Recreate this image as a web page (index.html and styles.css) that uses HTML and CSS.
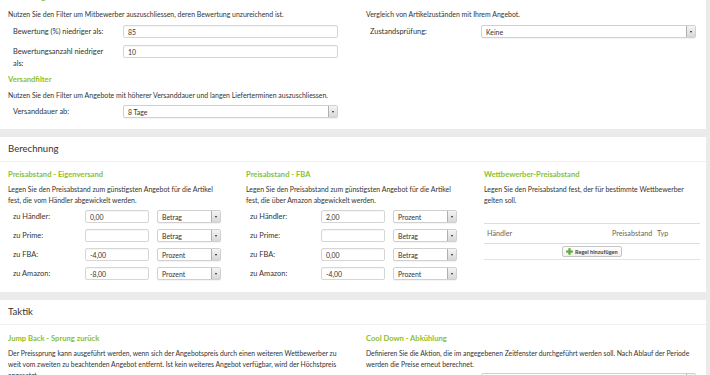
FILE: index.html
```html
<!DOCTYPE html>
<html lang="de">
<head>
<meta charset="utf-8">
<title>Einstellungen</title>
<link rel="stylesheet" href="styles.css">
</head>
<body>
<div class="page">
  <section class="panel panel-top">
    <div class="cols2">
      <div class="col">
        <h3 class="title">Bewertungsfilter</h3>
        <p class="desc">Nutzen Sie den Filter um Mitbewerber auszuschliessen, deren Bewertung unzureichend ist.</p>
        <div class="row"><label class="lbl">Bewertung (%) niedriger als:</label><input class="field" value="85"></div>
        <div class="row row-gap"><label class="lbl">Bewertungsanzahl niedriger als:</label><input class="field" value="10"></div>
        <h3 class="title title-sub">Versandfilter</h3>
        <p class="desc desc-tight">Nutzen Sie den Filter um Angebote mit höherer Versanddauer und langen Lieferterminen auszuschliessen.</p>
        <div class="row row-sel"><label class="lbl">Versanddauer ab:</label><div class="select"><span class="sel-text">8 Tage</span><span class="arrow"></span></div></div>
      </div>
      <div class="col">
        <h3 class="title">Zustandsfilter</h3>
        <p class="desc">Vergleich von Artikelzuständen mit Ihrem Angebot.</p>
        <div class="row"><label class="lbl">Zustandsprüfung:</label><div class="select"><span class="sel-text">Keine</span><span class="arrow"></span></div></div>
      </div>
    </div>
  </section>

  <section class="panel">
    <h2 class="panel-head">Berechnung</h2>
    <div class="panel-body cols3">
      <div class="col">
        <h3 class="title">Preisabstand - Eigenversand</h3>
        <p class="desc desc-b desc-narrow">Legen Sie den Preisabstand zum günstigsten Angebot für die Artikel fest, die vom Händler abgewickelt werden.</p>
        <div class="prow"><label class="plbl">zu Händler:</label><input class="field pfield" value="0,00"><div class="select psel"><span class="sel-text">Betrag</span><span class="arrow"></span></div></div>
        <div class="prow"><label class="plbl">zu Prime:</label><input class="field pfield" value=""><div class="select psel"><span class="sel-text">Betrag</span><span class="arrow"></span></div></div>
        <div class="prow"><label class="plbl">zu FBA:</label><input class="field pfield" value="-4,00"><div class="select psel"><span class="sel-text">Prozent</span><span class="arrow"></span></div></div>
        <div class="prow"><label class="plbl">zu Amazon:</label><input class="field pfield" value="-8,00"><div class="select psel"><span class="sel-text">Prozent</span><span class="arrow"></span></div></div>
      </div>
      <div class="col">
        <h3 class="title">Preisabstand - FBA</h3>
        <p class="desc desc-b desc-narrow">Legen Sie den Preisabstand zum günstigsten Angebot für die Artikel fest, die über Amazon abgewickelt werden.</p>
        <div class="prow"><label class="plbl">zu Händler:</label><input class="field pfield" value="2,00"><div class="select psel"><span class="sel-text">Prozent</span><span class="arrow"></span></div></div>
        <div class="prow"><label class="plbl">zu Prime:</label><input class="field pfield" value=""><div class="select psel"><span class="sel-text">Betrag</span><span class="arrow"></span></div></div>
        <div class="prow"><label class="plbl">zu FBA:</label><input class="field pfield" value="0,00"><div class="select psel"><span class="sel-text">Betrag</span><span class="arrow"></span></div></div>
        <div class="prow"><label class="plbl">zu Amazon:</label><input class="field pfield" value="-4,00"><div class="select psel"><span class="sel-text">Prozent</span><span class="arrow"></span></div></div>
      </div>
      <div class="col">
        <h3 class="title">Wettbewerber-Preisabstand</h3>
        <p class="desc desc-b desc-narrow">Legen Sie den Preisabstand fest, der für bestimmte Wettbewerber gelten soll.</p>
        <div class="rules">
          <div class="rules-head"><span>Händler</span><span>Preisabstand</span><span>Typ</span></div>
          <div class="rules-foot">
            <button class="btn-add" type="button"><svg class="plus" viewBox="0 0 8 8" width="7" height="7"><path d="M3 0.5h2v2.5h2.5v2H5v2.5H3V5H0.5V3H3z" fill="#63b22f" stroke="#3f8a1c" stroke-width="0.4"/></svg>Regel hinzufügen</button>
          </div>
        </div>
      </div>
    </div>
  </section>

  <section class="panel">
    <h2 class="panel-head">Taktik</h2>
    <div class="panel-body cols2 body2">
      <div class="col">
        <h3 class="title">Jump Back - Sprung zurück</h3>
        <p class="desc desc-b">Der Preissprung kann ausgeführt werden, wenn sich der Angebotspreis durch einen weiteren Wettbewerber zu weit vom zweiten zu beachtenden Angebot entfernt. Ist kein weiteres Angebot verfügbar, wird der Höchstpreis angesetzt.</p>
      </div>
      <div class="col">
        <h3 class="title">Cool Down - Abkühlung</h3>
        <p class="desc desc-b">Definieren Sie die Aktion, die im angegebenen Zeitfenster durchgeführt werden soll. Nach Ablauf der Periode werden die Preise erneut berechnet.</p>
        <div class="row row-cool"><label class="lbl">Aktion:</label><div class="select"><span class="sel-text">Keine</span><span class="arrow"></span></div></div>
      </div>
    </div>
  </section>
</div>
</body>
</html>
```

FILE: styles.css
```css
* { box-sizing: border-box; margin: 0; padding: 0; }

html, body { height: 100%; }

body {
  background: #ebebeb;
  font-family: Lato, "Open Sans", sans-serif;
  color: #333;
  font-size: 6.95px;
  overflow: hidden;
}

.page { width: 706px; }

.panel {
  background: #fff;
  margin-bottom: 8px;
}

.panel-top {
  margin-top: -8px;
  padding: 0 10px 11px 8px;
}

.cols2 {
  display: grid;
  grid-template-columns: 1fr 1fr;
  column-gap: 28px;
}

.cols3 {
  display: grid;
  grid-template-columns: 1fr 1fr 1fr;
  column-gap: 22px;
}

.panel-head {
  font-size: 9.6px;
  font-weight: 400;
  line-height: 24px;
  padding-left: 8px;
  border-bottom: 1px solid #efefef;
  color: #333;
}

.panel-body { padding: 7px 6px 12px 8px; }
.body2 { padding: 8px 10px 40px 8px; }
.body2 .desc { font-size: 6.8px; }

.title {
  font-size: 7.6px;
  font-weight: 700;
  color: #8cbf2a;
  line-height: 11px;
}
.title-sub { margin-top: 4px; }

.desc {
  line-height: 11px;
  margin-top: 6px;
}
.desc-tight { margin-top: 5px; }
.desc-b { margin-top: 4px; }
.desc-narrow { padding-right: 4px; }

.row {
  display: flex;
  align-items: flex-start;
  margin-top: 5px;
}
.row-gap { margin-top: 7px; }
.row-sel { margin-top: 4px; }
.row-cool { margin-top: 3px; }

.lbl {
  flex: 0 0 115px;
  padding: 1px 18px 0 5px;
  line-height: 12px;
  font-size: 7.4px;
}
.panel-top .col + .col .lbl { padding-left: 4px; }

.field {
  flex: 1;
  min-width: 0;
  height: 13px;
  border: 1px solid #d6d6d6;
  border-radius: 2px;
  background: #fff;
  font-family: inherit;
  font-size: 6.9px;
  color: #333;
  padding: 0 4px;
  box-shadow: inset 0 1px 1px rgba(0,0,0,0.04);
  outline: none;
}

.select {
  flex: 1;
  min-width: 0;
  height: 13px;
  border: 1px solid #d0d0d0;
  border-radius: 2px;
  background: #fff;
  display: flex;
  align-items: center;
  font-size: 6.9px;
  box-shadow: 0 1px 1px rgba(0,0,0,0.05);
}
.sel-text { flex: 1; padding-left: 4px; }

.arrow {
  width: 9px;
  height: 11px;
  border-left: 1px solid #b0b0b0;
  background: linear-gradient(#f4f4f4, #d8d8d8);
  position: relative;
}
.arrow::after {
  content: "";
  position: absolute;
  left: 2.5px;
  top: 4.5px;
  border-left: 1.5px solid transparent;
  border-right: 1.5px solid transparent;
  border-top: 2px solid #222;
}

.prow {
  display: flex;
  align-items: center;
  margin-top: 6px;
}
.desc-b + .prow { margin-top: 4px; }

.plbl {
  flex: 0 0 77px;
  padding-left: 5px;
  font-size: 7.4px;
  line-height: 13px;
}
.col:nth-child(2) .plbl { flex-basis: 75px; padding-left: 4px; }

.pfield { flex: 0 0 64px; }
.psel { flex: 0 0 64px; margin-left: 8px; }

.rules { margin-top: 17px; }

.rules-head {
  display: grid;
  grid-template-columns: 125px 45px 1fr;
  height: 21px;
  align-items: center;
  padding-left: 3px;
  border-top: 1px solid #d5e8b8;
  border-bottom: 1px solid #d5e8b8;
  color: #666;
  font-size: 7.2px;
}

.rules-foot {
  display: flex;
  justify-content: center;
  align-items: center;
  height: 16px;
  border-bottom: 1px solid #e3e3e3;
}

.btn-add {
  display: flex;
  align-items: center;
  gap: 2px;
  height: 11px;
  width: 60px;
  padding: 0 3px;
  border: 1px solid #c6c6c6;
  border-radius: 2px;
  background: linear-gradient(#ffffff, #f0f0f0);
  font-family: inherit;
  font-size: 5.6px;
  font-weight: 700;
  color: #444;
}
.plus { flex: 0 0 7px; }
```
